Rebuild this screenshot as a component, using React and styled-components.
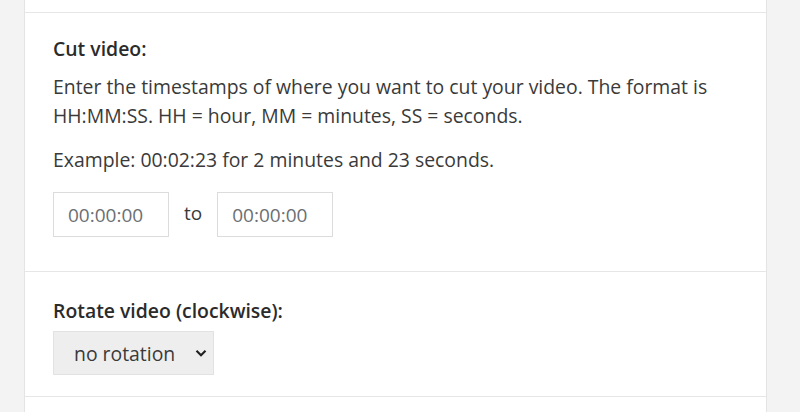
import React from "react";
import styled, { createGlobalStyle } from "styled-components";

const GlobalStyle = createGlobalStyle`
  body {
    margin: 0;
    background: #f3f3f3;
    font-family: "Open Sans", "Liberation Sans", sans-serif;
    color: #333;
  }
`;

const Page = styled.div`
  width: 743px;
  margin-left: 24px;
  height: 412px;
  overflow: hidden;
  background: #fff;
  border-left: 1px solid #e4e4e4;
  border-right: 1px solid #e4e4e4;
  box-sizing: border-box;
`;

const Spacer = styled.div`
  height: 12px;
`;

const Section = styled.div`
  border-top: 1px solid #e6e6e6;
  padding: ${(p) => p.pad || "21px 28px 0 28px"};
  height: ${(p) => p.h || "auto"};
  box-sizing: border-box;
`;

const Heading = styled.div`
  font-size: 19.4px;
  font-weight: 600;
  line-height: 29px;
  color: #2b2b2b;
  margin-bottom: ${(p) => p.mb || "9px"};
`;

const Text = styled.p`
  font-size: 19.4px;
  line-height: 29px;
  margin: 0 0 15px 0;
  color: #3a3a3a;
`;

const Row = styled.div`
  display: flex;
  align-items: center;
  gap: 15px;
  margin-top: 18px;
`;

const TimeInput = styled.input`
  width: 116px;
  height: 45px;
  box-sizing: border-box;
  border: 1px solid #dcdcdc;
  padding: 0 14px;
  font-family: inherit;
  font-size: 19px;
  color: #6b6f73;
  outline: none;
  &::placeholder {
    color: #6b6f73;
  }
`;

const To = styled.span`
  font-size: 19px;
  color: #3a3a3a;
  margin-top: -4px;
`;

const SelectBox = styled.div`
  width: 161px;
  height: 44px;
  box-sizing: border-box;
  background: #eeeeee;
  border: 1px solid #e2e2e2;
  display: flex;
  align-items: center;
  justify-content: space-between;
  padding: 0 6px 0 20px;
  font-size: 19.4px;
  color: #3a3a3a;
`;

const Chevron = () => (
  <svg width="12" height="8" viewBox="0 0 12 8">
    <path d="M1.5 1.8l4.5 4.4 4.5-4.4" fill="none" stroke="#222" strokeWidth="2.2" />
  </svg>
);

export default function App() {
  return (
    <>
      <GlobalStyle />
      <Page>
        <Spacer />
        <Section h="259px">
          <Heading>Cut video:</Heading>
          <Text>
            Enter the timestamps of where you want to cut your video. The format is
            HH:MM:SS. HH = hour, MM = minutes, SS = seconds.
          </Text>
          <Text>Example: 00:02:23 for 2 minutes and 23 seconds.</Text>
          <Row>
            <TimeInput placeholder="00:00:00" />
            <To>to</To>
            <TimeInput placeholder="00:00:00" />
          </Row>
        </Section>
        <Section h="125px" pad="24px 28px 0 28px">
          <Heading mb="6px">Rotate video (clockwise):</Heading>
          <SelectBox>
            <span>no rotation</span>
            <Chevron />
          </SelectBox>
        </Section>
        <Section />
      </Page>
    </>
  );
}
